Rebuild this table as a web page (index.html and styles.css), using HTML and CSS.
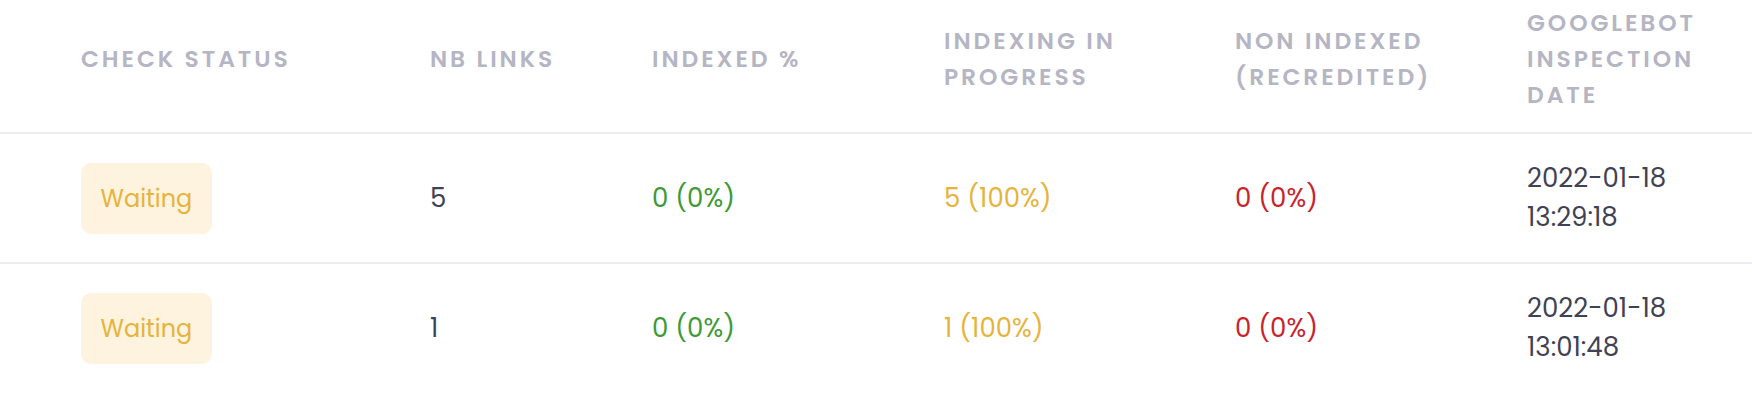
FILE: index.html
```html
<!DOCTYPE html>
<html lang="en">
<head>
<meta charset="utf-8">
<title>Checks</title>
<link rel="stylesheet" href="styles.css">
</head>
<body>
<div class="card">
  <table class="checks">
    <colgroup>
      <col class="c-status">
      <col class="c-links">
      <col class="c-indexed">
      <col class="c-progress">
      <col class="c-non">
      <col class="c-date">
    </colgroup>
    <thead>
      <tr>
        <th>Check status</th>
        <th>Nb links</th>
        <th>Indexed %</th>
        <th>Indexing in progress</th>
        <th>Non indexed (recredited)</th>
        <th>Googlebot inspection date</th>
      </tr>
    </thead>
    <tbody>
      <tr>
        <td><span class="badge badge-warning">Waiting</span></td>
        <td class="dark">5</td>
        <td class="green">0 (0%)</td>
        <td class="yellow">5 (100%)</td>
        <td class="red">0 (0%)</td>
        <td class="dark">2022-01-18 13:29:18</td>
      </tr>
      <tr>
        <td><span class="badge badge-warning">Waiting</span></td>
        <td class="dark">1</td>
        <td class="green">0 (0%)</td>
        <td class="yellow">1 (100%)</td>
        <td class="red">0 (0%)</td>
        <td class="dark">2022-01-18 13:01:48</td>
      </tr>
    </tbody>
  </table>
</div>
</body>
</html>
```

FILE: styles.css
```css
html, body {
  margin: 0;
  padding: 0;
  background: #ffffff;
}

body {
  font-family: "Poppins", "Inter", "Open Sans", sans-serif;
  color: #3f4254;
}

.card {
  width: 1752px;
  overflow: hidden;
}

.checks {
  width: 100%;
  border-collapse: collapse;
  table-layout: fixed;
}

.c-status { width: 430px; }
.c-links { width: 222px; }
.c-indexed { width: 292px; }
.c-progress { width: 291px; }
.c-non { width: 292px; }
.c-date { width: auto; }

.checks th {
  text-align: left;
  vertical-align: middle;
  font-size: 23.4px;
  font-weight: 600;
  letter-spacing: 2.9px;
  line-height: 36px;
  text-transform: uppercase;
  color: #b5b5c3;
  padding: 5px 20px 19px 0;
  border-bottom: 2px solid #ececf2;
}

.checks td {
  vertical-align: middle;
  font-size: 26px;
  font-weight: 400;
  line-height: 39px;
  padding: 25px 20px 25px 0;
}

.checks th:first-child,
.checks td:first-child {
  padding-left: 81px;
}

.checks tbody tr:not(:last-child) td {
  border-bottom: 2px solid #ececf2;
}

.checks td:last-child {
  padding-right: 20px;
}

.badge {
  display: inline-block;
  height: 71px;
  line-height: 71px;
  padding: 0 19.5px;
  border-radius: 10px;
  font-size: 24px;
  vertical-align: middle;
}

.badge-warning {
  background: #fdf3df;
  color: #e6b43c;
}

.dark { color: #3f4254; }
.green { color: #3d9a37; }
.yellow { color: #e6b43c; }
.red { color: #c8242c; }
```
